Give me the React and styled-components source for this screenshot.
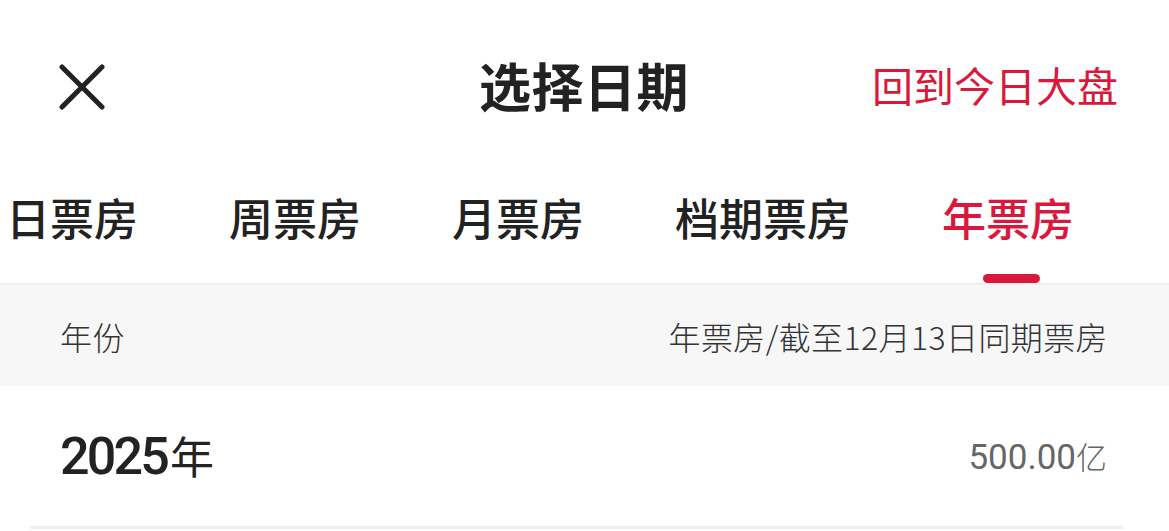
import React from "react";
import styled, { createGlobalStyle } from "styled-components";

const Global = createGlobalStyle`
  html, body { margin: 0; padding: 0; background: #ffffff; }
  body { font-family: "Noto Sans CJK SC", "Noto Sans", sans-serif; color: #222; }
  * { box-sizing: border-box; }
`;

const RED = "#d8193b";

const Page = styled.div`
  width: 1169px;
  height: 531px;
  overflow: hidden;
  background: #fff;
  display: flex;
  flex-direction: column;
`;

const TopBar = styled.header`
  height: 175px;
  display: grid;
  grid-template-columns: 1fr auto 1fr;
  align-items: center;
  padding: 0 51px 6px 58px;
`;

const CloseButton = styled.button`
  width: 48px;
  height: 48px;
  border: 0;
  padding: 0;
  background: none;
  display: flex;
  align-items: center;
  justify-content: center;
  justify-self: start;
  margin-top: 4px;
`;

const Title = styled.h1`
  margin: 0 0 0 -8px;
  font-size: 52px;
  font-weight: 700;
  line-height: 1;
  color: #222;
  letter-spacing: 0.5px;
`;

const TodayLink = styled.a`
  justify-self: end;
  font-size: 41px;
  line-height: 1;
  color: ${RED};
  font-weight: 400;
  text-decoration: none;
`;

const TabBar = styled.nav`
  height: 110px;
  display: flex;
  gap: 91px;
  padding-left: 6px;
  border-bottom: 2px solid #ededed;
`;

const Tab = styled.div`
  display: flex;
  flex-direction: column;
  align-items: center;
  padding-top: 18px;
  font-size: 44px;
  line-height: 48px;
  font-weight: 500;
  color: ${(p) => (p.$active ? RED : "#222")};
  white-space: nowrap;
`;

const Indicator = styled.span`
  margin-top: auto;
  margin-left: 6px;
  width: 57px;
  height: 9px;
  border-radius: 5px;
  background: ${(p) => (p.$active ? RED : "transparent")};
`;

const TableHead = styled.div`
  height: 101px;
  background: #f7f7f7;
  display: flex;
  align-items: center;
  justify-content: space-between;
  padding: 0 61px 0 60px;
  font-size: 32px;
  letter-spacing: 0.4px;
  color: #333;
  font-weight: 300;
`;

const Row = styled.div`
  height: 143px;
  margin: 0 46px 0 30px;
  padding: 0 16px 2px 30px;
  display: flex;
  align-items: center;
  justify-content: space-between;
  border-bottom: 3px solid #efefef;
`;

const Year = styled.div`
  display: flex;
  align-items: baseline;
  color: #222;
`;

const YearNum = styled.span`
  font-family: Roboto, "Noto Sans", sans-serif;
  font-size: 52px;
  font-weight: 500;
  letter-spacing: -2.8px;
  margin-right: 3px;
`;

const YearUnit = styled.span`
  font-size: 44px;
  font-weight: 400;
`;

const Amount = styled.div`
  display: flex;
  align-items: baseline;
  color: #666;
`;

const AmountNum = styled.span`
  font-family: Roboto, "Noto Sans", sans-serif;
  font-size: 35px;
  font-weight: 400;
`;

const AmountUnit = styled.span`
  font-size: 31px;
  font-weight: 300;
`;

const tabs = ["日票房", "周票房", "月票房", "档期票房", "年票房"];

export default function App() {
  return (
    <>
      <Global />
      <Page>
        <TopBar>
          <CloseButton aria-label="关闭">
            <svg width="46" height="46" viewBox="0 0 46 46">
              <path
                d="M3 3 L43 43 M43 3 L3 43"
                stroke="#222"
                strokeWidth="5"
                strokeLinecap="round"
                fill="none"
              />
            </svg>
          </CloseButton>
          <Title>选择日期</Title>
          <TodayLink>回到今日大盘</TodayLink>
        </TopBar>
        <TabBar>
          {tabs.map((t, i) => {
            const active = i === tabs.length - 1;
            return (
              <Tab key={t} $active={active}>
                {t}
                <Indicator $active={active} />
              </Tab>
            );
          })}
        </TabBar>
        <TableHead>
          <span>年份</span>
          <span>年票房/截至12月13日同期票房</span>
        </TableHead>
        <Row>
          <Year>
            <YearNum>2025</YearNum>
            <YearUnit>年</YearUnit>
          </Year>
          <Amount>
            <AmountNum>500.00</AmountNum>
            <AmountUnit>亿</AmountUnit>
          </Amount>
        </Row>
      </Page>
    </>
  );
}
